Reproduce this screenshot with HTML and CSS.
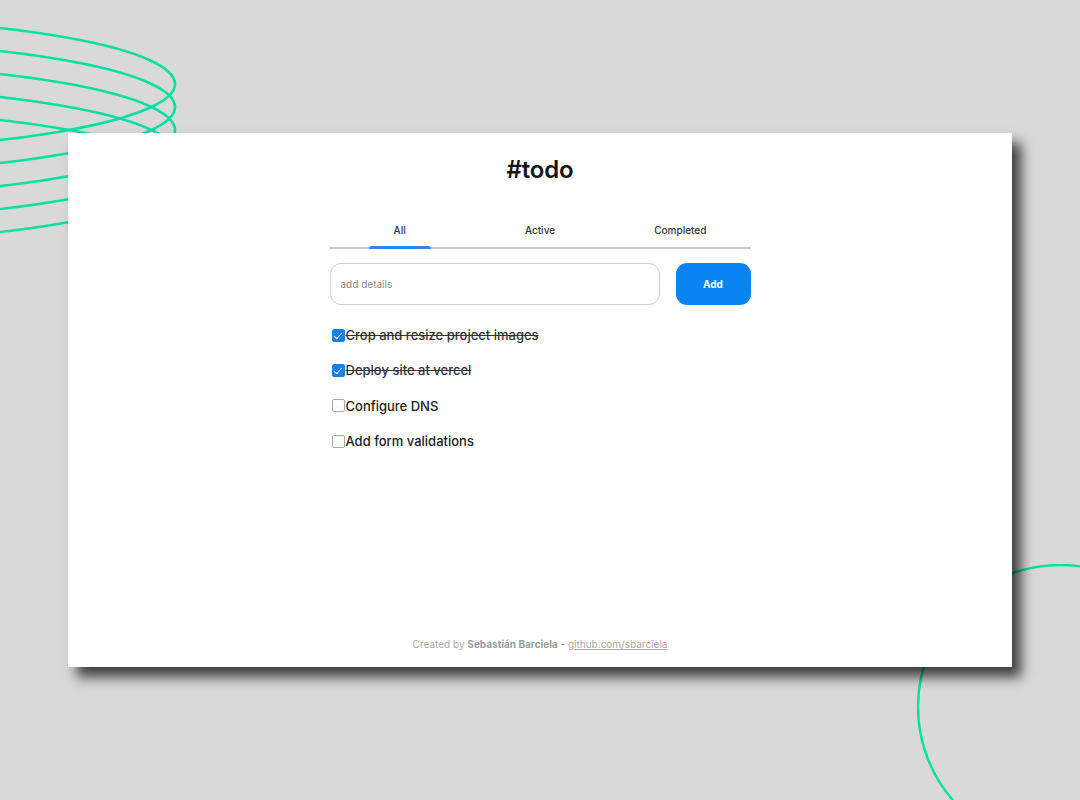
FILE: index.html
```html
<!DOCTYPE html>
<html lang="en">
<head>
<meta charset="utf-8">
<title>#todo</title>
<link rel="stylesheet" href="styles.css">
</head>
<body>
<svg class="deco deco-rings" width="260" height="260" viewBox="0 0 260 260" aria-hidden="true">
  <g fill="none" stroke="#05e0a1" stroke-width="2.6">
    <ellipse cx="-200" cy="84" rx="375" ry="66"/>
    <ellipse cx="-200" cy="107" rx="375" ry="66"/>
    <ellipse cx="-200" cy="130" rx="375" ry="66"/>
    <ellipse cx="-200" cy="153" rx="375" ry="66"/>
    <ellipse cx="-200" cy="176" rx="375" ry="66"/>
  </g>
</svg>
<svg class="deco deco-circle" width="170" height="240" viewBox="0 0 170 240" aria-hidden="true">
  <circle cx="143" cy="143" r="142" fill="none" stroke="#05e0a1" stroke-width="2.4"/>
</svg>

<main class="card">
  <h1 class="title">#todo</h1>
  <nav class="tabs">
    <div class="tab active">All</div>
    <div class="tab">Active</div>
    <div class="tab">Completed</div>
  </nav>
  <form class="add-row" onsubmit="return false">
    <input class="add-input" type="text" placeholder="add details">
    <button class="add-btn" type="submit">Add</button>
  </form>
  <ul class="list">
    <li class="item done"><input class="check" type="checkbox" checked><span>Crop and resize project images</span></li>
    <li class="item done"><input class="check" type="checkbox" checked><span>Deploy site at vercel</span></li>
    <li class="item"><input class="check" type="checkbox"><span>Configure DNS</span></li>
    <li class="item"><input class="check" type="checkbox"><span>Add form validations</span></li>
  </ul>
  <footer class="footer">Created by <b>Sebastián Barciela</b> - <a href="#">github.com/sbarciela</a></footer>
</main>
</body>
</html>
```

FILE: styles.css
```css
* { box-sizing: border-box; }
html, body { margin: 0; padding: 0; }
body {
  width: 1080px;
  height: 800px;
  background: #d9d9d9;
  font-family: "Inter", "Noto Sans", sans-serif;
  color: #333;
  position: relative;
  overflow: hidden;
  padding: 133px 0 0 68px;
}
.deco { position: absolute; }
.deco-rings { left: 0; top: 0; }
.deco-circle { left: 917px; top: 564px; }

.card {
  position: relative;
  width: 944px;
  height: 534px;
  background: #fff;
  box-shadow: 9px 10px 12px rgba(0,0,0,0.72);
  display: flex;
  flex-direction: column;
  align-items: center;
  padding-top: 22px;
}
.title {
  margin: 0;
  font-size: 24px;
  line-height: 30px;
  font-weight: 600;
  color: #151515;
  letter-spacing: -0.2px;
}
.tabs {
  margin-top: 38px;
  width: 421px;
  display: grid;
  grid-template-columns: 1fr 1fr 1fr;
  border-bottom: 2px solid #c8c8c8;
}
.tab {
  display: flex;
  flex-direction: column;
  align-items: center;
  font-size: 10px;
  line-height: 14px;
  font-weight: 500;
  color: #333;
}
.tab::after {
  content: "";
  display: block;
  width: 62px;
  height: 3px;
  margin-top: 9px;
  margin-bottom: -2px;
  border-radius: 3px 3px 0 0;
  background: transparent;
}
.tab.active::after { background: #2f80ed; }

.add-row {
  margin-top: 14px;
  width: 421px;
  display: flex;
  gap: 16px;
}
.add-input {
  flex: 1;
  height: 42px;
  border: 1px solid #d0d0d0;
  border-radius: 11px;
  padding: 0 10px;
  font-family: inherit;
  font-size: 10px;
  color: #333;
  outline: none;
}
.add-input::placeholder { color: #8a8a8a; }
.add-btn {
  width: 75px;
  height: 42px;
  border: none;
  border-radius: 11px;
  background: #0a84f0;
  color: #fff;
  font-family: inherit;
  font-size: 10px;
  font-weight: 700;
}
.list {
  list-style: none;
  margin: 22px 0 0;
  padding: 0;
  width: 421px;
  display: flex;
  flex-direction: column;
  gap: 19.4px;
}
.item {
  display: flex;
  align-items: center;
  height: 16px;
  font-size: 13px;
  font-weight: 500;
  color: #222;
}
.check {
  appearance: none;
  -webkit-appearance: none;
  position: relative;
  margin: 0 1px 0 2px;
  width: 13px;
  height: 13px;
  border: 1px solid #a8a8a8;
  border-radius: 2px;
  background: #fff;
  flex: none;
}
.check:checked {
  background: #1a7fe8;
  border-color: #1a7fe8;
}
.check:checked::after {
  content: "";
  position: absolute;
  left: 3.5px;
  top: 1px;
  width: 3px;
  height: 7px;
  border: solid #fff;
  border-width: 0 1.6px 1.6px 0;
  transform: rotate(42deg);
}
.item.done span { text-decoration: line-through; color: #333; }
.footer {
  margin-top: auto;
  margin-bottom: 17px;
  font-size: 10px;
  color: #a8a8a8;
}
.footer b { font-weight: 700; color: #9a9a9a; }
.footer a { color: #a8a8a8; text-decoration: underline; }
```
